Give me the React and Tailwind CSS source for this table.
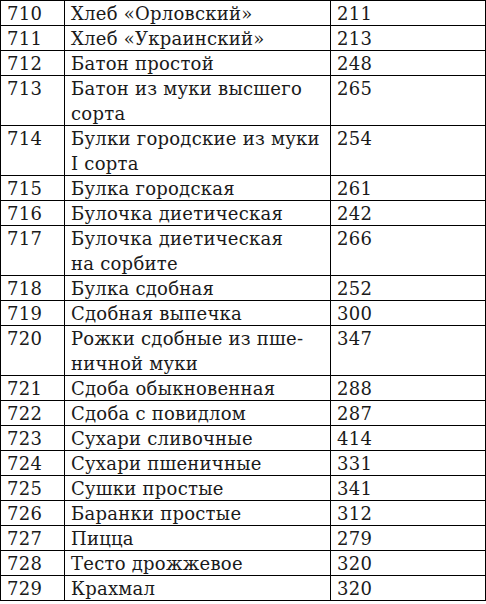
import React from "react";

const rows = [
  ["710", ["Хлеб «Орловский»"], "211"],
  ["711", ["Хлеб «Украинский»"], "213"],
  ["712", ["Батон простой"], "248"],
  ["713", ["Батон из муки высшего", "сорта"], "265"],
  ["714", ["Булки городские из муки", "I сорта"], "254"],
  ["715", ["Булка городская"], "261"],
  ["716", ["Булочка диетическая"], "242"],
  ["717", ["Булочка диетическая", "на сорбите"], "266"],
  ["718", ["Булка сдобная"], "252"],
  ["719", ["Сдобная выпечка"], "300"],
  ["720", ["Рожки сдобные из пше-", "ничной муки"], "347"],
  ["721", ["Сдоба обыкновенная"], "288"],
  ["722", ["Сдоба с повидлом"], "287"],
  ["723", ["Сухари сливочные"], "414"],
  ["724", ["Сухари пшеничные"], "331"],
  ["725", ["Сушки простые"], "341"],
  ["726", ["Баранки простые"], "312"],
  ["727", ["Пицца"], "279"],
  ["728", ["Тесто дрожжевое"], "320"],
  ["729", ["Крахмал"], "320"],
];

const App = () => {
  return (
    <div className="w-[486px] h-[604px] bg-white text-[#1a1a1a] [font-family:'DejaVu_Serif',serif] text-[18px] leading-[25px] tracking-[0.25px]">
      <div className="border-t border-l border-r border-black">
        {rows.map(([num, name, kcal]) => (
          <div
            key={num}
            className={`grid grid-cols-[64px_266px_1fr] border-b border-black ${
              name.length > 1 ? "h-[50px]" : "h-[25px]"
            }`}
          >
            <div className="border-r border-black pl-[6px]">{num}</div>
            <div className="border-r border-black pl-[6px]">
              {name.map((line) => (
                <div key={line}>{line}</div>
              ))}
            </div>
            <div className="pl-[6px]">{kcal}</div>
          </div>
        ))}
      </div>
    </div>
  );
};

export default App;
